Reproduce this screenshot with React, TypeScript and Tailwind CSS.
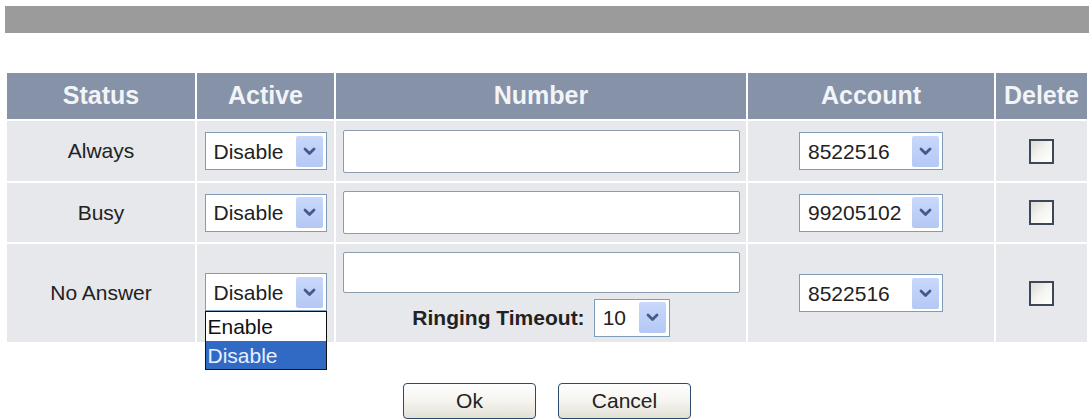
import { Fragment, type ReactNode } from 'react'

const font = { fontFamily: '"Liberation Sans", Arial, sans-serif' }

function Chevron() {
  return (
    <svg width="13" height="9" viewBox="0 0 13 9" aria-hidden>
      <path d="M2 2 L6.5 6.5 L11 2" fill="none" stroke="#46598a" strokeWidth="2.8" strokeLinecap="round" strokeLinejoin="round" />
    </svg>
  )
}

function Select({ value, width }: { value: string; width: string }) {
  return (
    <div className={`flex h-[38px] ${width} items-center border border-[#7f9db9] bg-white pl-[8px] pr-[3px]`}>
      <span className="flex-1 text-[21px] leading-none text-[#222]">{value}</span>
      <span className="flex h-[31px] w-[27px] items-center justify-center rounded-[2px] bg-gradient-to-b from-[#c9d8fb] to-[#b3c8f4]">
        <Chevron />
      </span>
    </div>
  )
}

function Checkbox() {
  return <span className="block h-[25px] w-[25px] border-2 border-[#3c4858] bg-gradient-to-br from-[#dcdcd6] via-[#f4f4f0] to-white" />
}

function TextBox({ h }: { h: string }) {
  return <div className={`${h} w-[397px] rounded-[2px] border border-[#8c9cac] bg-white`} />
}

function Cell({ children, className = '' }: { children?: ReactNode; className?: string }) {
  return <div className={`flex items-center justify-center bg-[#e6e8eb] ${className}`}>{children}</div>
}

function Head({ children }: { children: ReactNode }) {
  return (
    <div className="flex items-center justify-center bg-[#8592a7] text-[25px] font-bold text-[#f2f4f7]">{children}</div>
  )
}

function Button({ label }: { label: string }) {
  return (
    <button className="h-[36px] w-[133px] rounded-[4px] border border-[#2c4a6e] bg-gradient-to-b from-white via-[#f5f4ef] to-[#e2e0d6] text-[21px] text-[#222]">
      {label}
    </button>
  )
}

const rows = [
  { status: 'Always', account: '8522516' },
  { status: 'Busy', account: '99205102' },
]

export default function App() {
  return (
    <div className="min-h-[420px] w-[1090px] bg-white pt-[6px]" style={font}>
      <div className="ml-[5px] h-[27px] w-[1084px] bg-[#9b9b9b]" />

      <div className="ml-[7px] mt-[40px] grid w-[1080px] grid-cols-[188px_137px_410px_246px_91px] grid-rows-[46px_60px_59px_98px] gap-[2px]">
        <Head>Status</Head>
        <Head>Active</Head>
        <Head>Number</Head>
        <Head>Account</Head>
        <Head>Delete</Head>

        {rows.map((r) => (
          <Fragment key={r.status}>
            <Cell className="text-[21px] text-[#222]">{r.status}</Cell>
            <Cell>
              <Select value="Disable" width="w-[122px]" />
            </Cell>
            <Cell>
              <TextBox h="h-[43px]" />
            </Cell>
            <Cell>
              <Select value={r.account} width="w-[144px]" />
            </Cell>
            <Cell>
              <Checkbox />
            </Cell>
          </Fragment>
        ))}

        <Cell className="text-[21px] text-[#222]">No Answer</Cell>
        <Cell>
          <div className="relative z-10 mt-[-2px]">
            <Select value="Disable" width="w-[122px]" />
            {/* open option list */}
            <div className="absolute left-0 top-full w-[122px] border border-[#111] bg-white text-[21px] leading-none">
              <div className="flex h-[29px] items-center pl-[2px] text-[#111]">Enable</div>
              <div className="flex h-[28px] items-center bg-[#316ac5] pl-[2px] text-[#e8efff]">Disable</div>
            </div>
          </div>
        </Cell>
        <Cell className="flex-col gap-[6px] pt-[2px]">
          <TextBox h="h-[41px]" />
          <div className="flex items-center gap-[9px]">
            <span className="text-[21px] font-bold text-[#222]">Ringing Timeout:</span>
            <Select value="10" width="w-[76px]" />
          </div>
        </Cell>
        <Cell>
          <Select value="8522516" width="w-[144px]" />
        </Cell>
        <Cell>
          <Checkbox />
        </Cell>
      </div>

      <div className="ml-[7px] mt-[41px] flex w-[1080px] justify-center gap-[22px]">
        <Button label="Ok" />
        <Button label="Cancel" />
      </div>
    </div>
  )
}
